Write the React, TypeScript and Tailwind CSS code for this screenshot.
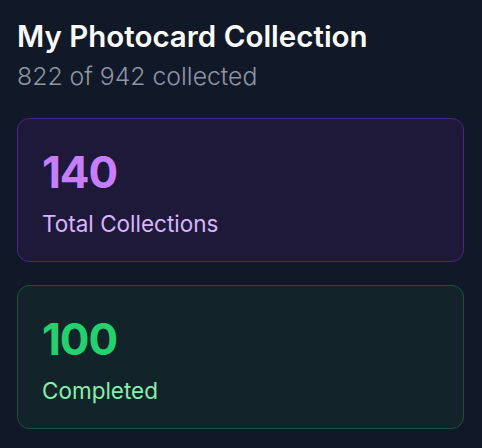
const stats = [
  {
    value: "140",
    label: "Total Collections",
    card: "border-[#4a2585] bg-[#1f1939]",
    valueColor: "text-[#c77dff]",
    labelColor: "text-[#d8b4fe]",
  },
  {
    value: "100",
    label: "Completed",
    card: "border-[#1d5239] bg-[#12232a]",
    valueColor: "text-[#1fd46e]",
    labelColor: "text-[#86efac]",
  },
];

export default function App() {
  return (
    <div className="min-h-screen bg-[#111827] px-[17px] pt-[18px] font-['Inter',sans-serif]">
      <h1 className="text-[29.5px] leading-9 font-semibold text-white">
        My Photocard Collection
      </h1>
      <p className="mt-[6px] text-[24.8px] leading-8 font-light text-[#8e96a6]">
        822 of 942 collected
      </p>

      <div className="mt-[26px] flex w-[447px] flex-col gap-[23px]">
        {stats.map((stat) => (
          <div
            key={stat.label}
            className={`h-[144px] rounded-xl border px-6 pt-[28px] ${stat.card}`}
          >
            <div
              className={`text-[44px] leading-[50px] font-bold tracking-tight ${stat.valueColor}`}
            >
              {stat.value}
            </div>
            <div className={`mt-[11px] text-[22.5px] leading-8 ${stat.labelColor}`}>
              {stat.label}
            </div>
          </div>
        ))}
      </div>
    </div>
  );
}
